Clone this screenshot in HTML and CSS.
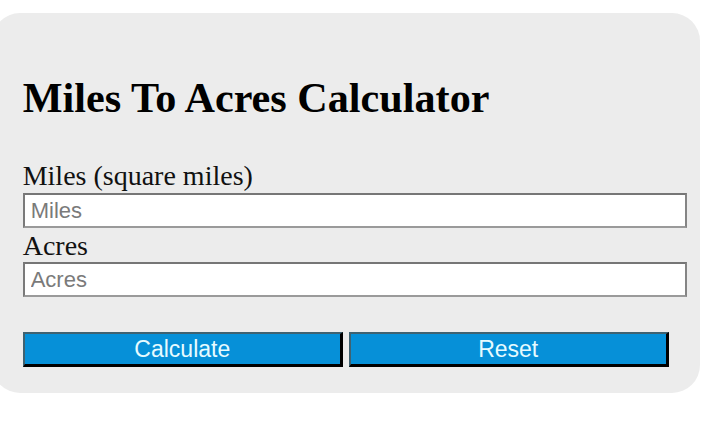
FILE: index.html
```html
<!DOCTYPE html>
<html lang="en">
<head>
<meta charset="utf-8">
<title>Miles To Acres Calculator</title>
<link rel="stylesheet" href="styles.css">
</head>
<body>
<div class="panel">
  <h1 class="title">Miles To Acres Calculator</h1>
  <label class="field-label" for="miles">Miles (square miles)</label>
  <input class="field-input" id="miles" type="text" placeholder="Miles">
  <label class="field-label field-label--second" for="acres">Acres</label>
  <input class="field-input field-input--second" id="acres" type="text" placeholder="Acres">
  <div class="actions">
    <button class="btn" type="button">Calculate</button>
    <button class="btn" type="button">Reset</button>
  </div>
</div>
</body>
</html>
```

FILE: styles.css
```css
html, body {
  margin: 0;
  padding: 0;
  background: #ffffff;
}

body {
  padding-top: 13px;
  font-family: "Liberation Serif", "Times New Roman", serif;
}

.panel {
  margin-left: -8px;
  width: 708px;
  box-sizing: border-box;
  padding: 62px 13px 26px 30.7px;
  background: #ececec;
  border-radius: 28px;
}

.title {
  margin: 0;
  font-family: "Liberation Serif", "Times New Roman", serif;
  font-weight: bold;
  font-size: 42.2px;
  line-height: 46px;
  color: #000;
}

.field-label {
  display: block;
  margin-top: 39px;
  font-size: 28px;
  line-height: 31px;
  color: #111;
}

.field-label--second {
  margin-top: 2px;
}

.field-input {
  display: block;
  box-sizing: border-box;
  width: 664px;
  height: 35px;
  margin: 2px 0 0 0;
  padding: 0 6px;
  border: 2px solid #858585;
  border-top-color: #767676;
  border-left-color: #7a7a7a;
  border-bottom-color: #9a9a9a;
  background: #fff;
  font-family: "Liberation Sans", Arial, sans-serif;
  font-size: 22px;
  color: #222;
  outline: none;
}

.field-input--second {
  margin-top: 1px;
}

.field-input::placeholder {
  color: #7a7a7a;
}

.actions {
  margin-top: 35px;
  font-size: 23px;
  line-height: 35px;
  height: 35px;
}

.btn {
  display: inline-block;
  vertical-align: top;
  box-sizing: border-box;
  width: 48.2%;
  height: 35px;
  margin: 0;
  padding: 0;
  border-style: solid;
  border-width: 2px 3px 3px 2px;
  border-color: #3f6271 #000 #000 #3f6271;
  background: #0690d8;
  color: #e6fbff;
  font-family: "Liberation Sans", Arial, sans-serif;
  font-size: 23px;
  line-height: 29px;
  cursor: pointer;
}
```
